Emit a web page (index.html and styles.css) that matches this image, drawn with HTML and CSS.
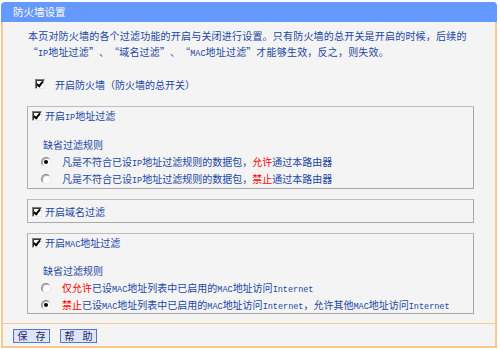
FILE: index.html
```
<!DOCTYPE html>
<html lang="zh-CN">
<head>
<meta charset="utf-8">
<title>防火墙设置</title>
<link rel="stylesheet" href="styles.css">
</head>
<body>
<div class="frame">
  <div class="title">防火墙设置</div>
  <div class="content">
    <p class="desc">本页对防火墙的各个过滤功能的开启与关闭进行设置。只有防火墙的总开关是开启的时候，后续的<br><span class="q ql">“</span><span class="en">IP</span>地址过滤<span class="q qr">”</span>、<span class="q ql">“</span>域名过滤<span class="q qr">”</span>、<span class="q ql">“</span><span class="en">MAC</span>地址过滤<span class="q qr">”</span>才能够生效，反之，则失效。</p>
    <div class="master"><span class="cb"></span><span>开启防火墙（防火墙的总开关）</span></div>

    <div class="box box-ip">
      <div class="head"><span class="cb"></span><span>开启<span class="en">IP</span>地址过滤</span></div>
      <div class="label">缺省过滤规则</div>
      <div class="opt"><span class="rb on"></span><span>凡是不符合已设<span class="en">IP</span>地址过滤规则的数据包，<em>允许</em>通过本路由器</span></div>
      <div class="opt"><span class="rb"></span><span>凡是不符合已设<span class="en">IP</span>地址过滤规则的数据包，<em>禁止</em>通过本路由器</span></div>
    </div>

    <div class="box box-domain">
      <div class="head"><span class="cb"></span><span>开启域名过滤</span></div>
    </div>

    <div class="box box-mac">
      <div class="head"><span class="cb"></span><span>开启<span class="en">MAC</span>地址过滤</span></div>
      <div class="label">缺省过滤规则</div>
      <div class="opt"><span class="rb"></span><span><em>仅允许</em>已设<span class="en">MAC</span>地址列表中已启用的<span class="en">MAC</span>地址访问<span class="en">Internet</span></span></div>
      <div class="opt"><span class="rb on"></span><span><em>禁止</em>已设<span class="en">MAC</span>地址列表中已启用的<span class="en">MAC</span>地址访问<span class="en">Internet</span>，允许其他<span class="en">MAC</span>地址访问<span class="en">Internet</span></span></div>
    </div>
  </div>
  <div class="actions">
    <button class="btn">保 存</button>
    <button class="btn">帮 助</button>
  </div>
</div>
</body>
</html>
```

FILE: styles.css
```
html, body {
  margin: 0;
  background: #ffffff;
}
body {
  font-family: "Noto Sans CJK SC", "Noto Sans", sans-serif;
  font-size: 10px;
  color: #2146a3;
}
.frame {
  margin: 2px 0 0 1px;
  width: 496px;
}
.title {
  height: 20px;
  line-height: 20px;
  background: #6699ff;
  border-radius: 4px 4px 0 0;
  color: #ffffff;
  font-size: 10.5px;
  padding-left: 12px;
}
.content {
  background: #f4f4f4;
  border-left: 2px solid #fbc88f;
  border-right: 2px solid #fbc88f;
  padding: 6px 21px 9px 24px;
}
.desc {
  margin: 0 0 0 1px;
  line-height: 16px;
  letter-spacing: 0.2px;
  white-space: nowrap;
}
.q {
  display: inline-block;
  width: 10px;
}
.ql {
  text-align: right;
}
.qr {
  text-align: left;
}
.en {
  font-family: "Liberation Mono", monospace;
  font-size: 8.5px;
  letter-spacing: 0;
}
em {
  font-style: normal;
  color: #ff0000;
}
.master {
  display: flex;
  align-items: center;
  height: 14px;
  margin-top: 15px;
  padding-left: 8px;
  gap: 10px;
}
.box {
  width: 445px;
  border: 1px solid #a8a8a8;
  border-top-color: #bdbdbd;
  border-left-color: #b0b0b0;
  background: #f4f4f4;
}
.box-ip {
  margin-top: 15px;
  padding-bottom: 1px;
}
.box-domain {
  margin-top: 10px;
  padding: 3px 0 2px;
}
.box-mac {
  margin-top: 10px;
}
.head {
  display: flex;
  align-items: center;
  height: 17px;
  padding-left: 4px;
  gap: 3px;
}
.label {
  height: 17px;
  line-height: 17px;
  margin-top: 12px;
  padding-left: 15px;
}
.box-mac .label {
  margin-top: 11px;
}
.opt {
  display: flex;
  align-items: center;
  height: 17px;
  padding-left: 13px;
  gap: 11px;
}
.cb {
  display: inline-block;
  box-sizing: border-box;
  width: 10px;
  height: 10px;
  flex: none;
  background: #ffffff;
  border: 1px solid;
  border-color: #7c7c7c #e8e8e8 #e8e8e8 #7c7c7c;
  box-shadow: inset 1px 1px 0 #3a3a3a;
  position: relative;
}
.cb::after {
  content: "";
  position: absolute;
  left: 2px;
  top: 0px;
  width: 2px;
  height: 5px;
  border: solid #000000;
  border-width: 0 2px 2px 0;
  transform: rotate(40deg);
}
.rb {
  display: inline-block;
  box-sizing: border-box;
  width: 10px;
  height: 10px;
  flex: none;
  border-radius: 50%;
  background: #ffffff;
  border: 1px solid;
  border-color: #8a8a8a #e8e8e8 #e8e8e8 #8a8a8a;
  box-shadow: inset 1px 1px 0 #b0b0b0;
  position: relative;
}
.rb.on::after {
  content: "";
  position: absolute;
  left: 2px;
  top: 2px;
  width: 4px;
  height: 4px;
  border-radius: 50%;
  background: #000000;
}
.actions {
  display: flex;
  gap: 10px;
  background: #f4f4f4;
  border-left: 2px solid #fbc88f;
  border-right: 2px solid #fbc88f;
  border-top: 1px solid #fbc88f;
  border-bottom: 2px solid #fbc88f;
  padding: 5px 10px 3px;
}
.btn {
  width: 37px;
  height: 14px;
  padding: 0;
  margin: 0;
  font-family: "Noto Sans CJK SC", sans-serif;
  font-size: 10px;
  line-height: 12px;
  letter-spacing: 3px;
  text-indent: 3px;
  white-space: pre;
  color: #1a2a60;
  background: #dfe5f8;
  border: 1px solid #5a76c8;
  border-radius: 0;
}
```
